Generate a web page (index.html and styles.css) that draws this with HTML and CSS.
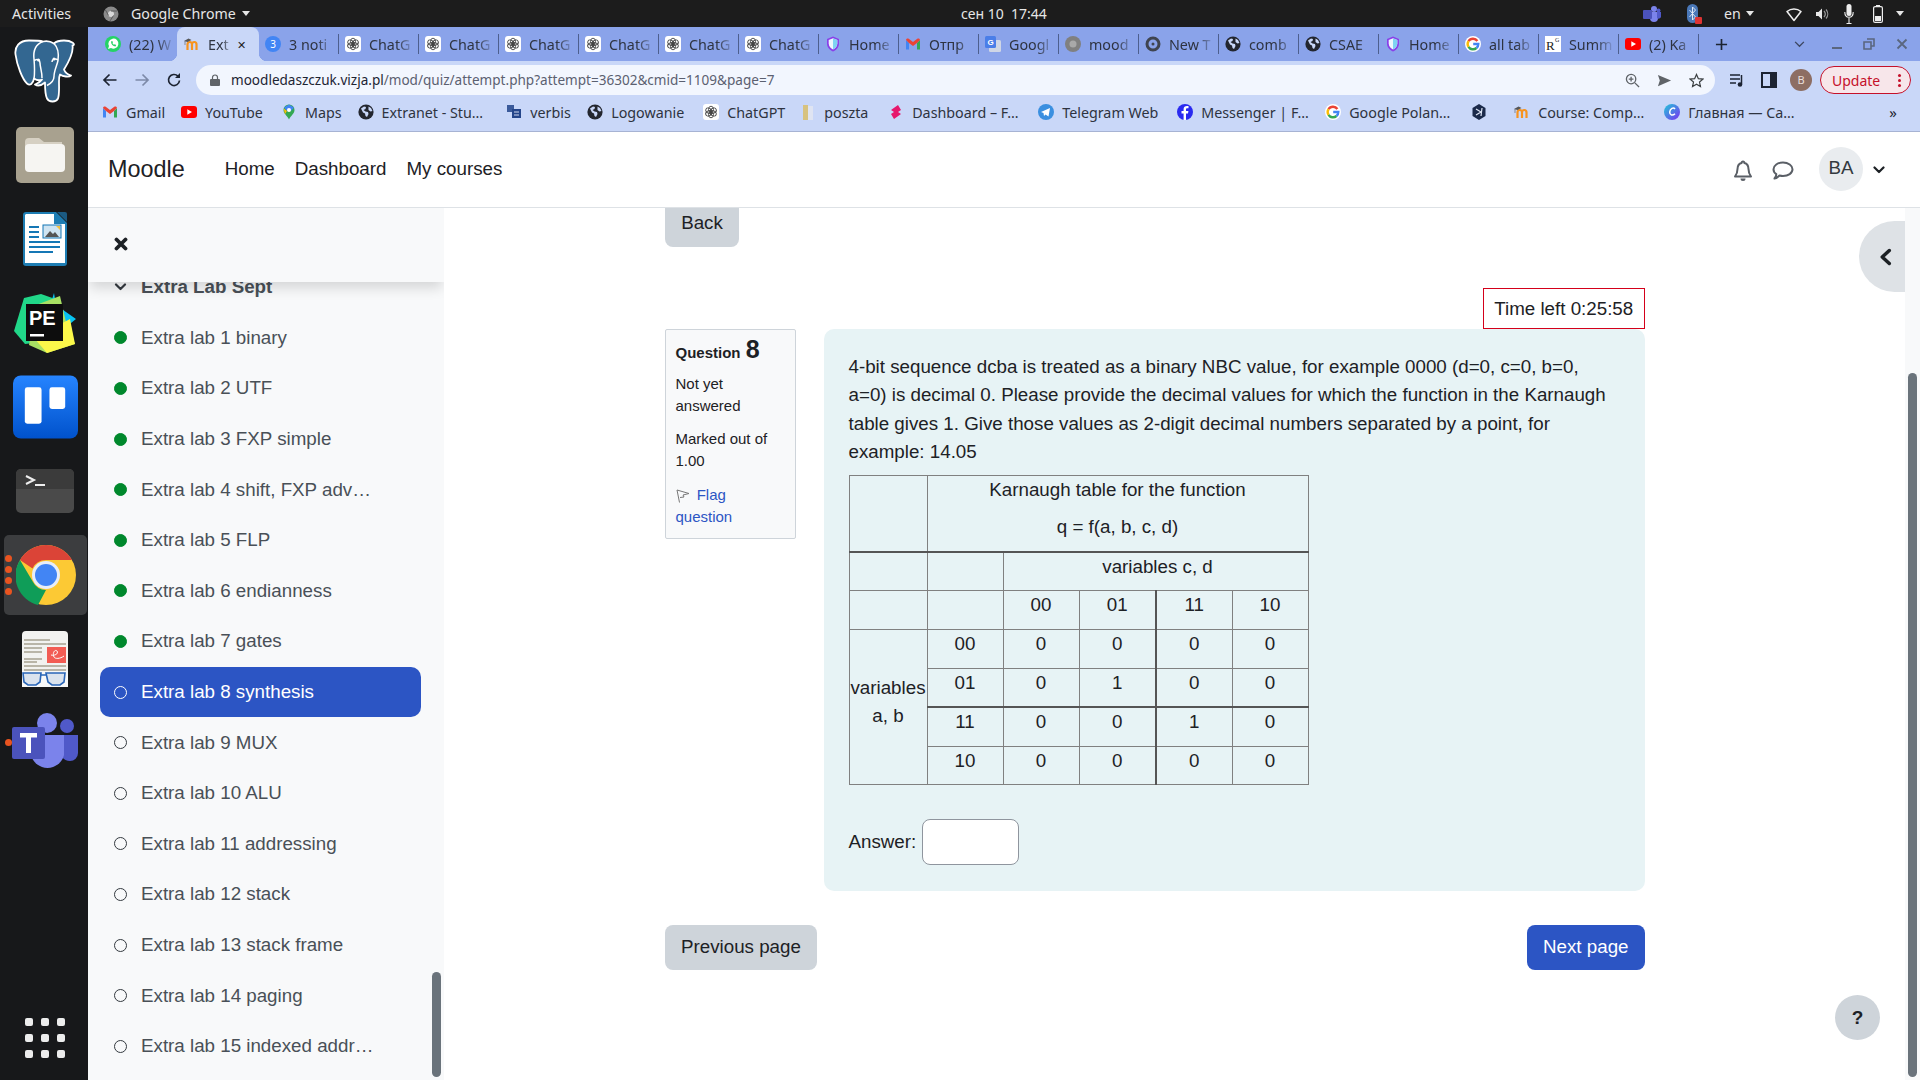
FILE: index.html
```html
<!DOCTYPE html>
<html lang="en">
<head>
<meta charset="utf-8">
<title>Extra lab 8 synthesis</title>
<link rel="stylesheet" href="styles.css">
</head>
<body>
<svg class="defs" aria-hidden="true">
  <symbol id="i-gpt" viewBox="0 0 16 16"><rect width="16" height="16" rx="3" fill="#fff"/><g fill="none" stroke="#444" stroke-width=".9"><ellipse cx="8" cy="5.500" rx="2.500" ry="3.300"/><ellipse cx="8" cy="5.500" rx="2.500" ry="3.300" transform="rotate(60 8 8)"/><ellipse cx="8" cy="5.500" rx="2.500" ry="3.300" transform="rotate(120 8 8)"/><ellipse cx="8" cy="5.500" rx="2.500" ry="3.300" transform="rotate(180 8 8)"/><ellipse cx="8" cy="5.500" rx="2.500" ry="3.300" transform="rotate(240 8 8)"/><ellipse cx="8" cy="5.500" rx="2.500" ry="3.300" transform="rotate(300 8 8)"/></g></symbol>
  <symbol id="i-globe" viewBox="0 0 16 16"><circle cx="8" cy="8" r="7.600" fill="#23262f"/><path d="M3 4.500l3-2 2 .5-.5 2-2 1 2 1.500 2.500.5.500 2-1.500 3-1.500-1-.5-2.500-2-1zM10.500 2.500l2.500 1.500 1.500 3-2 .5-2-1.500z" fill="#c9d7f8"/></symbol>
  <symbol id="i-home" viewBox="0 0 16 16"><path d="M8 .5l6 2.500v4.500c0 4-3 6.800-6 8-3-1.200-6-4-6-8V3z" fill="#8a3fe8"/><path d="M8 2.200l4.300 1.800v3.600c0 3-2.200 5-4.300 6-2.100-1-4.300-3-4.300-6V4z" fill="#eef6fd"/><path d="M8 2.200l4.300 1.800v3.600c0 3-2.200 5-4.300 6z" fill="#7fd3f2"/></symbol>
  <symbol id="i-gmail" viewBox="0 0 16 16"><path d="M1 4v9.500h3V7z" fill="#4285f4"/><path d="M12 7v6.500h3V4z" fill="#34a853"/><path d="M1 4c0-1.500 1.700-2 2.700-1.200L8 6l4.300-3.200C13.300 2 15 2.500 15 4l-3 3-4 3-4-3z" fill="#ea4335"/></symbol>
  <symbol id="i-google" viewBox="0 0 16 16"><g fill="none" stroke-width="2.400"><path d="M12.400 5A5.300 5.300 0 0 0 3.500 5.200" stroke="#ea4335"/><path d="M3.500 5.200a5.300 5.300 0 0 0 0 5.600" stroke="#fbbc05"/><path d="M3.500 10.800a5.300 5.300 0 0 0 8 1.200" stroke="#34a853"/><path d="M11.500 12c1.200-1 1.800-2.300 1.800-4H8.200" stroke="#4285f4"/></g></symbol>
  <symbol id="i-yt" viewBox="0 0 16 16"><rect y="2" width="16" height="12" rx="3" fill="#f00"/><path d="M6.300 5.200v5.600L11 8z" fill="#fff"/></symbol>
  <symbol id="i-moodle" viewBox="0 0 16 16"><path d="M3.500 14V8.500c0-1.800 1-2.500 2.300-2.500 1.200 0 2.200.7 2.200 2.500V14M8 8.500C8 6.700 9 6 10.300 6c1.200 0 2.200.7 2.200 2.500V14" fill="none" stroke="#f7931e" stroke-width="2.200"/><path d="M0 5l4.500-2.500L7.500 4 3.500 6z" fill="#555"/><path d="M1 5v4" stroke="#555" stroke-width=".6"/></symbol>
  <symbol id="i-chevron" viewBox="0 0 12 8"><path d="M1.500 1.500L6 6l4.500-4.500" fill="none" stroke="currentColor" stroke-width="2.200" stroke-linecap="round" stroke-linejoin="round"/></symbol>
</svg>

<header class="topbar">
  <div class="top-left">
    <span class="activities">Activities</span>
    <svg class="tb-app" viewBox="0 0 16 16"><circle cx="8" cy="8" r="7.500" fill="#8a8a8a"/><circle cx="8" cy="8" r="3" fill="#d8d8d8"/><path d="M8 5h6M5.500 9.500L2.500 4M10.500 9.500L7 15" stroke="#5b5b5b" stroke-width="1"/></svg>
    <span class="app-name">Google Chrome</span>
    <i class="tri"></i>
  </div>
  <time class="clock">сен 10&nbsp; 17:44</time>
  <div class="top-right">
    <svg class="st-teams" viewBox="0 0 18 18"><circle cx="11" cy="4" r="3" fill="#7b83eb"/><circle cx="15.500" cy="5.500" r="2" fill="#5059c9"/><path d="M7 7h8v6a4 4 0 0 1-8 0z" fill="#7b83eb"/><path d="M14 7h4v5a2.500 2.500 0 0 1-4 1z" fill="#5059c9"/><rect y="5" width="9" height="9" rx="1" fill="#4b53bc"/></svg>
    <svg class="st-bt" viewBox="0 0 16 22"><rect x="1" y="1" width="11" height="19" rx="5.500" fill="#4a78b8"/><path d="M3.500 7l6 7-3 3V4l3 3-6 7" fill="none" stroke="#dfe8f5" stroke-width="1"/><rect x="9" y="14" width="7" height="7" rx="1" fill="#d33"/></svg>
    <span class="st-lang">en</span><i class="tri st-tri1"></i>
    <svg class="st-wifi" viewBox="0 0 16 16"><path d="M1 5.500C5 2 11 2 15 5.500L8 14.500z" fill="none" stroke="#eee" stroke-width="1.500" stroke-linejoin="round"/></svg>
    <svg class="st-vol" viewBox="0 0 14 16"><path d="M1 6h2.500L7 2.500v11L3.500 10H1z" fill="#e8e8e8"/><path d="M9 5c1.500 1.700 1.500 4.300 0 6M11 3.500c2.300 2.600 2.300 6.400 0 9" fill="none" stroke="#999" stroke-width="1.200"/></svg>
    <svg class="st-mic" viewBox="0 0 10 20"><rect x="2.500" y="0" width="5" height="12" rx="2.500" fill="#eee"/><path d="M.8 8c0 7 8.400 7 8.400 0M5 14v5M2.500 19.500h5" fill="none" stroke="#eee" stroke-width="1.100"/></svg>
    <svg class="st-batt" viewBox="0 0 10 18"><path d="M3 1V0h4v1" fill="#eee"/><rect x=".6" y="1.600" width="8.800" height="15.800" rx="1.500" fill="none" stroke="#eee" stroke-width="1.200"/><rect x="2" y="11" width="6" height="5" fill="#eee"/></svg>
    <i class="tri st-tri2"></i>
  </div>
</header>

<div class="desk">
  <nav class="dock">
    <div class="dock-item">
      <svg class="d-pg" viewBox="0 0 64 64"><path d="M15 1.500C5 1.500 .500 8 1.500 15.500c1.500 11 7 25 11.500 29 3 2.500 6 .5 7-5 3 2 6 2 8 1-2 3-5 4-7 5 3 2 7 .5 10-2 0 6 0 12 2 16 2 4 9 4 11 0 1.500-4 1-10 1-17 0-3 0-5 1-7 3 2 9 3 11 1-3-1-6-3-7-6 5-8 9.500-18 8.500-24C62.500 6 58 1.500 50 1.500c-4 0-8 1-10 3-3-2-7-3-11-2-3-1-8-1-14-1z" fill="#336791" stroke="#fff" stroke-width="1.800" stroke-linejoin="round"/><path d="M29 2.500C22 5 19 11 20 20c.5 6 1 13 0 20M40 4.500c4 4 5 10 4 17-1 5-4 10-4 16 0 4-3 7-7 9M20 22c3-3 6-1 6 2 0 4 2 8 2 15M44 21c-3-2-6-1-6 2" fill="none" stroke="#fff" stroke-width="1.500"/><circle cx="24.500" cy="21" r="1.500" fill="#fff"/><circle cx="40" cy="20" r="1.500" fill="#fff"/></svg>
    </div>
    <div class="dock-item">
      <svg class="d-tile" viewBox="0 0 58 56"><rect width="58" height="56" rx="5" fill="#a8a18f"/><path d="M9 15a4 4 0 0 1 4-4h10l5 4h18v25H9z" fill="#d6d0c3"/><path d="M9 21a4 4 0 0 1 4-4h32a4 4 0 0 1 4 4v20a4 4 0 0 1-4 4H13a4 4 0 0 1-4-4z" fill="#f6f5f2"/></svg>
    </div>
    <div class="dock-item">
      <svg class="d-doc" viewBox="0 0 46 56"><path d="M4 1h30l11 11v40a3 3 0 0 1-3 3H4a3 3 0 0 1-3-3V4a3 3 0 0 1 3-3z" fill="#1e7db3"/><path d="M4 3h28v10h11v39H3V4z" fill="#fff"/><path d="M35 1h8a2 2 0 0 1 2 2v8z" fill="#1b5a82"/><path d="M7 15h10v2H7zM7 20h10v2H7zM7 25h10v2H7zM7 30h31v2H7zM7 35h31v2H7zM7 40h24v2H7z" fill="#1577b5"/><rect x="21" y="14" width="18" height="13" fill="#cfe4f2" stroke="#1577b5"/><path d="M23 26l5-6 3 3 2-2 4 5z" fill="#555"/><path d="M34 15h4v4z" fill="#f2c040"/></svg>
    </div>
    <div class="dock-item">
      <svg class="d-pe" viewBox="0 0 62 60"><path d="M10 5L27 1l20 7-9 40-27 3L0 38z" fill="#21d789"/><path d="M40 0l2 12 20 14-10 8-20-8z" fill="#07c3f2"/><path d="M22 12L46 3l6 26 9 22-28 9-18-8z" fill="#a8e063"/><path d="M20 45l36-19 5 25-28 9z" fill="#fcf84a"/><rect x="12" y="11" width="37" height="37" fill="#0d0d0d"/><text x="15" y="32" class="pe-text">PE</text><rect x="16" y="41" width="14" height="2.500" fill="#fff"/></svg>
    </div>
    <div class="dock-item">
      <svg class="d-trello" viewBox="0 0 66 64"><defs><linearGradient id="tr" x1="0" y1="0" x2="0" y2="1"><stop offset="0" stop-color="#2684ff"/><stop offset="1" stop-color="#0052cc"/></linearGradient></defs><rect width="66" height="64" rx="8" fill="url(#tr)"/><rect x="12" y="12" width="17" height="37" rx="2.500" fill="#fff"/><rect x="37" y="12" width="16" height="22" rx="2.500" fill="#fff"/></svg>
    </div>
    <div class="dock-item">
      <svg class="d-term" viewBox="0 0 58 44"><rect width="58" height="44" rx="5" fill="#4a4a4a"/><path d="M0 5a5 5 0 0 1 5-5h48a5 5 0 0 1 5 5v15H0z" fill="#3b3b3b"/><path d="M10 7l8 4-8 4" fill="none" stroke="#eee" stroke-width="2"/><rect x="19" y="15" width="10" height="2" fill="#eee"/></svg>
    </div>
    <div class="dock-item dock-active">
      <i class="pip pip1"></i><i class="pip pip2"></i><i class="pip pip3"></i><i class="pip pip4"></i>
      <svg class="d-chrome" viewBox="0 0 60 60"><circle cx="30" cy="30" r="30" fill="#fcc934"/><path d="M30 0a30 30 0 0 1 26 15H30a15 15 0 0 0-13.500 8.500L4 15A30 30 0 0 1 30 0z" fill="#db4437"/><path d="M4 15l13 22a15 15 0 0 0 13 8l-8 15A30 30 0 0 1 4 15z" fill="#0f9d58"/><circle cx="30" cy="30" r="14" fill="#e8eef8"/><circle cx="30" cy="30" r="11" fill="#4285f4"/></svg>
    </div>
    <div class="dock-item">
      <svg class="d-doc" viewBox="0 0 46 56"><rect width="46" height="56" rx="4" fill="#f2f2f0"/><path d="M2 8h26v2H2zM2 12h42v2H2zM2 16h18v2H2zM2 20h18v2H2zM2 27h18v2H2zM2 30h13v2H2zM2 34h42v2H2zM2 38h42v2H2z" fill="#b9b5a8"/><rect x="25" y="16" width="19" height="16" fill="#f25c54"/><path d="M29 24c3 1 8-1 6-4-2-2-5 2-3 6 1 2 6 2 10-1" fill="none" stroke="#fff" stroke-width="1"/><rect y="40" width="46" height="16" fill="#f8f8f8"/><path d="M1 42h18l-1 9-4 3H6l-4-3zM24 42h19l-1 9-4 3h-8l-4-3zM19 44h5" fill="#dbe3ee" stroke="#2a66b8" stroke-width="1.600"/></svg>
    </div>
    <div class="dock-item">
      <i class="pip pip-t"></i>
      <svg class="d-teams" viewBox="0 0 66 60"><circle cx="35" cy="10" r="10" fill="#7b83eb"/><circle cx="55" cy="13" r="7" fill="#5059c9"/><path d="M50 22h16v18a8 8 0 0 1-8 8 10 10 0 0 1-8-4z" fill="#5059c9"/><path d="M19 22h33v20a17 17 0 0 1-33 0z" fill="#7b83eb"/><rect y="14" width="33" height="32" rx="2" fill="#4b53bc"/><path d="M8 20h17v4.500h-6V40h-5V24.500H8z" fill="#fff"/></svg>
    </div>
    <div class="dock-grid"><i></i><i></i><i></i><i></i><i></i><i></i><i></i><i></i><i></i></div>
  </nav>

  <div class="browser">
    <div class="tabstrip">
      <div class="tab"><svg class="fav" viewBox="0 0 16 16"><circle cx="8" cy="8" r="8" fill="#25d366"/><path d="M3 13l1-3a5 5 0 1 1 2 2z" fill="#fff"/><path d="M6 5.500c0 3 2 4.500 4.500 5l.7-1.500-1.500-.8-.7.600c-.8-.400-1.300-1-1.600-1.700l.6-.7L7.300 5z" fill="#25d366"/></svg><span class="tab-t">(22) W</span></div>
      <div class="tab tab-active"><svg class="fav"><use href="#i-moodle"/></svg><span class="tab-t">Ext</span><span class="tab-x">✕</span></div>
      <div class="tab sep"><span class="fav badge3">3</span><span class="tab-t">3 noti</span></div>
      <div class="tab sep"><svg class="fav"><use href="#i-gpt"/></svg><span class="tab-t">ChatG</span></div>
      <div class="tab sep"><svg class="fav"><use href="#i-gpt"/></svg><span class="tab-t">ChatG</span></div>
      <div class="tab sep"><svg class="fav"><use href="#i-gpt"/></svg><span class="tab-t">ChatG</span></div>
      <div class="tab sep"><svg class="fav"><use href="#i-gpt"/></svg><span class="tab-t">ChatG</span></div>
      <div class="tab sep"><svg class="fav"><use href="#i-gpt"/></svg><span class="tab-t">ChatG</span></div>
      <div class="tab sep"><svg class="fav"><use href="#i-gpt"/></svg><span class="tab-t">ChatG</span></div>
      <div class="tab sep"><svg class="fav"><use href="#i-home"/></svg><span class="tab-t">Home</span></div>
      <div class="tab sep"><svg class="fav"><use href="#i-gmail"/></svg><span class="tab-t">Отпр</span></div>
      <div class="tab sep"><svg class="fav" viewBox="0 0 16 16"><rect x="4" y="4" width="12" height="12" rx="1.500" fill="#cfd6e6"/><rect width="11" height="12" rx="1.500" fill="#4a7ee8"/><text x="2.500" y="9" class="fav-g">G</text></svg><span class="tab-t">Googl</span></div>
      <div class="tab sep"><svg class="fav" viewBox="0 0 16 16"><circle cx="8" cy="8" r="8" fill="#808080"/><circle cx="8" cy="8" r="3.500" fill="#a9a9a9"/></svg><span class="tab-t">mood</span></div>
      <div class="tab sep"><svg class="fav" viewBox="0 0 16 16"><circle cx="8" cy="8" r="6" fill="none" stroke="#3f4450" stroke-width="3"/><circle cx="8" cy="8" r="1.500" fill="#3f4450"/></svg><span class="tab-t">New T</span></div>
      <div class="tab sep"><svg class="fav"><use href="#i-globe"/></svg><span class="tab-t">comb</span></div>
      <div class="tab sep"><svg class="fav"><use href="#i-globe"/></svg><span class="tab-t">CSAE</span></div>
      <div class="tab sep"><svg class="fav"><use href="#i-home"/></svg><span class="tab-t">Home</span></div>
      <div class="tab sep"><svg class="fav fav-white"><use href="#i-google"/></svg><span class="tab-t">all tab</span></div>
      <div class="tab sep"><svg class="fav" viewBox="0 0 16 16"><rect width="16" height="16" fill="#fff"/><text x="1" y="14" class="fav-r">R</text><text x="10" y="6" class="fav-rg">G</text></svg><span class="tab-t">Summ</span></div>
      <div class="tab sep"><svg class="fav"><use href="#i-yt"/></svg><span class="tab-t">(2) Ka</span></div>
      <div class="tab sep tab-end"></div>
      <svg class="tab-plus" viewBox="0 0 14 14"><path d="M7 1v12M1 7h12" stroke="#1d2433" stroke-width="1.800"/></svg>
      <svg class="win win-chev" viewBox="0 0 12 8"><path d="M1 1l5 5 5-5" fill="none" stroke="#3c4660" stroke-width="1.500"/></svg>
      <svg class="win win-min" viewBox="0 0 12 12"><path d="M1 10h10" stroke="#5a667f" stroke-width="2"/></svg>
      <svg class="win win-max" viewBox="0 0 12 12"><path d="M4 1h7v7H8M1 4h7v7H1z" fill="none" stroke="#5a667f" stroke-width="1.600"/></svg>
      <svg class="win win-close" viewBox="0 0 12 12"><path d="M1.500 1.500l9 9M10.500 1.500l-9 9" stroke="#5a667f" stroke-width="1.800"/></svg>
    </div>

    <div class="toolbar">
      <svg class="tool t-back" viewBox="0 0 16 16"><path d="M14.500 8H2M7.500 2.500L2 8l5.500 5.500" fill="none" stroke="#1d2433" stroke-width="1.700"/></svg>
      <svg class="tool t-fwd" viewBox="0 0 16 16"><path d="M1.500 8H14M8.500 2.500L14 8l-5.500 5.500" fill="none" stroke="#7d8aa8" stroke-width="1.700"/></svg>
      <svg class="tool t-reload" viewBox="0 0 16 16"><path d="M13.500 8.500a5.500 5.500 0 1 1-1.500-4.300" fill="none" stroke="#1d2433" stroke-width="1.700"/><path d="M14 1v5h-5z" fill="#1d2433"/></svg>
      <div class="omnibox">
        <svg class="lock" viewBox="0 0 10 12"><path d="M2.500 5V3.500a2.500 2.500 0 0 1 5 0V5" fill="none" stroke="#5f6368" stroke-width="1.200"/><rect y="5" width="10" height="7" rx="1" fill="#5f6368"/></svg>
        <span class="url"><b>moodledaszczuk.vizja.pl</b>/mod/quiz/attempt.php?attempt=36302&amp;cmid=1109&amp;page=7</span>
        <svg class="om-i om-zoom" viewBox="0 0 16 16"><circle cx="6.500" cy="6.500" r="5" fill="none" stroke="#5f6368" stroke-width="1.400"/><path d="M10.500 10.500L15 15M6.500 4v5M4 6.500h5" stroke="#5f6368" stroke-width="1.400"/></svg>
        <svg class="om-i om-send" viewBox="0 0 16 16"><path d="M1 2l14 6-14 6 2-6z" fill="#5f6368"/></svg>
        <svg class="om-i om-star" viewBox="0 0 16 16"><path d="M8 1.500l2 4.500 4.800.5-3.600 3.200 1 4.800L8 12l-4.200 2.500 1-4.800L1.200 6.500 6 6z" fill="none" stroke="#3c4043" stroke-width="1.300"/></svg>
      </div>
      <svg class="tool t-list" viewBox="0 0 16 16"><path d="M1 3h10M1 7h10M1 11h6" stroke="#1d2433" stroke-width="1.500"/><path d="M12.500 3v9" stroke="#1d2433" stroke-width="1.500"/><circle cx="11" cy="12.500" r="2.300" fill="#1d2433"/></svg>
      <svg class="tool t-side" viewBox="0 0 16 16"><rect x="1" y="1" width="14" height="14" fill="none" stroke="#1d2433" stroke-width="2"/><rect x="9" y="1" width="6" height="14" fill="#1d2433"/></svg>
      <span class="profile">B</span>
      <div class="update"><span>Update</span><i class="dots"></i></div>
    </div>

    <div class="bookmarks">
      <a class="bm"><svg class="fav"><use href="#i-gmail"/></svg><span>Gmail</span></a>
      <a class="bm"><svg class="fav"><use href="#i-yt"/></svg><span>YouTube</span></a>
      <a class="bm"><svg class="fav" viewBox="0 0 16 16"><path d="M8 .5a5.500 5.500 0 0 1 5.500 5.500c0 3.500-3.500 5.500-5.500 9.500C6 11.500 2.500 9.500 2.500 6A5.500 5.500 0 0 1 8 .5z" fill="#34a853"/><path d="M3 3.500L8 .5l5 3-2.500 3-5 0z" fill="#4285f4"/><path d="M2.700 4.500L6 7l-2 3z" fill="#fbbc05"/><circle cx="8" cy="6" r="2" fill="#fff"/></svg><span>Maps</span></a>
      <a class="bm"><svg class="fav"><use href="#i-globe"/></svg><span>Extranet - Stu…</span></a>
      <a class="bm"><svg class="fav" viewBox="0 0 16 16"><rect x="1" y="1" width="7" height="7" fill="#3a5a9b"/><rect x="6" y="5" width="9" height="9" fill="#24458a"/><path d="M8 8h5M8 11h5" stroke="#cfd8ee"/></svg><span>verbis</span></a>
      <a class="bm"><svg class="fav"><use href="#i-globe"/></svg><span>Logowanie</span></a>
      <a class="bm"><svg class="fav"><use href="#i-gpt"/></svg><span>ChatGPT</span></a>
      <a class="bm"><svg class="fav" viewBox="0 0 16 16"><rect x="3" y="1" width="5" height="15" fill="#d7c27f"/><rect x="8" y="2" width="5" height="14" fill="#dfe4f2"/></svg><span>poszta</span></a>
      <a class="bm"><svg class="fav" viewBox="0 0 16 16"><path d="M10 1L3 6l3 2-3 2 3 5 7-5-3-2 3-2z" fill="#e6176d"/></svg><span>Dashboard – F…</span></a>
      <a class="bm"><svg class="fav" viewBox="0 0 16 16"><circle cx="8" cy="8" r="8" fill="#3a8fe0"/><path d="M3 8l9-4-1.500 8.500-3-2-1.500 1.500-.5-3z" fill="#fff"/></svg><span>Telegram Web</span></a>
      <a class="bm"><svg class="fav" viewBox="0 0 16 16"><circle cx="8" cy="8" r="8" fill="#2a2af0"/><path d="M9 16V9.500h2l.4-2.500H9V5.500c0-.8.400-1.300 1.300-1.300h1.200V2.100c-2.800-.5-4.900.3-4.900 3V7H4.500v2.500h2.100V16z" fill="#fff"/></svg><span>Messenger | F…</span></a>
      <a class="bm"><svg class="fav fav-white"><use href="#i-google"/></svg><span>Google Polan…</span></a>
      <a class="bm"><svg class="fav" viewBox="0 0 16 16"><path d="M8 0l6.500 4v8L8 16l-6.500-4V4z" fill="#1b2a4a"/><path d="M5 5l5 3-5 3M11 4l-1 8" fill="none" stroke="#dfe6f5" stroke-width="1.200"/></svg></a>
      <a class="bm"><svg class="fav"><use href="#i-moodle"/></svg><span>Course: Comp…</span></a>
      <a class="bm"><svg class="fav" viewBox="0 0 16 16"><defs><linearGradient id="cv" x1="0" y1="0" x2="1" y2="1"><stop offset="0" stop-color="#21c8d8"/><stop offset="1" stop-color="#7b2ff2"/></linearGradient></defs><circle cx="8" cy="8" r="8" fill="url(#cv)"/><path d="M11 5c-1.500-2-5-.5-5.300 3-.2 3.200 3 4 5.300 1.700" fill="none" stroke="#fff" stroke-width="1.500"/></svg><span>Главная — Ca…</span></a>
      <span class="bm-more">»</span>
    </div>

    <div class="page">
      <header class="navbar">
        <span class="brand">Moodle</span>
        <a class="nav-link">Home</a>
        <a class="nav-link">Dashboard</a>
        <a class="nav-link">My courses</a>
        <svg class="nav-bell" viewBox="0 0 20 22"><path d="M10 1.500a1.300 1.300 0 0 1 1.300 1.500c3 .7 4.200 3 4.200 6 0 4 1 5.500 2.500 7.500H2c1.500-2 2.500-3.500 2.500-7.500 0-3 1.200-5.300 4.200-6A1.300 1.300 0 0 1 10 1.500z" fill="none" stroke="#5a5f66" stroke-width="2" stroke-linejoin="round"/><path d="M7.500 18.500a2.500 2.500 0 0 0 5 0z" fill="#5a5f66"/></svg>
        <svg class="nav-chat" viewBox="0 0 22 20"><path d="M11 1.500c5.300 0 9.500 3 9.500 6.800s-4.200 6.700-9.500 6.700c-1.300 0-2.500-.2-3.500-.5-1.200 1.200-3 2.700-5 3 1-1.200 1.800-2.700 1.800-4.300C2.500 12 1.500 10.300 1.500 8.300 1.500 4.500 5.700 1.500 11 1.500z" fill="none" stroke="#5a5f66" stroke-width="2" stroke-linejoin="round"/></svg>
        <span class="avatar">BA</span>
        <svg class="nav-caret"><use href="#i-chevron"/></svg>
      </header>

      <div class="page-body">
        <aside class="sidebar">
          <div class="side-head">
            <svg class="side-x" viewBox="0 0 14 14"><path d="M2.500 2.500l9 9M11.500 2.500l-9 9" stroke="#1d2125" stroke-width="3.800" stroke-linecap="round"/></svg>
          </div>
          <ul class="side-list">
            <li class="side-sec"><svg class="side-caret"><use href="#i-chevron"/></svg><span>Extra Lab Sept</span></li>
            <li class="side-item done"><i class="dot"></i><span>Extra lab 1 binary</span></li>
            <li class="side-item done"><i class="dot"></i><span>Extra lab 2 UTF</span></li>
            <li class="side-item done"><i class="dot"></i><span>Extra lab 3 FXP simple</span></li>
            <li class="side-item done"><i class="dot"></i><span>Extra lab 4 shift, FXP adv…</span></li>
            <li class="side-item done"><i class="dot"></i><span>Extra lab 5 FLP</span></li>
            <li class="side-item done"><i class="dot"></i><span>Extra lab 6 endianness</span></li>
            <li class="side-item done"><i class="dot"></i><span>Extra lab 7 gates</span></li>
            <li class="side-item current"><i class="dot"></i><span>Extra lab 8 synthesis</span></li>
            <li class="side-item"><i class="dot"></i><span>Extra lab 9 MUX</span></li>
            <li class="side-item"><i class="dot"></i><span>Extra lab 10 ALU</span></li>
            <li class="side-item"><i class="dot"></i><span>Extra lab 11 addressing</span></li>
            <li class="side-item"><i class="dot"></i><span>Extra lab 12 stack</span></li>
            <li class="side-item"><i class="dot"></i><span>Extra lab 13 stack frame</span></li>
            <li class="side-item"><i class="dot"></i><span>Extra lab 14 paging</span></li>
            <li class="side-item"><i class="dot"></i><span>Extra lab 15 indexed addr…</span></li>
          </ul>
          <i class="side-thumb"></i>
        </aside>

        <main class="main">
          <a class="btn btn-back">Back</a>
          <div class="timer-row"><div class="timer">Time left 0:25:58</div></div>
          <section class="question">
            <div class="q-info">
              <h3 class="q-no">Question <span>8</span></h3>
              <p>Not yet answered</p>
              <p>Marked out of 1.00</p>
              <a class="q-flag"><svg class="flag" viewBox="0 0 14 14"><path d="M3.500 13.500L1 1l12 3.500-6 1.500 1 2-4 .5" fill="none" stroke="#777" stroke-width="1"/></svg> Flag question</a>
            </div>
            <div class="q-body">
              <p class="q-text">4-bit sequence dcba is treated as a binary NBC value, for example 0000 (d=0, c=0, b=0, a=0) is decimal 0. Please provide the decimal values for which the function in the Karnaugh table gives 1. Give those values as 2-digit decimal numbers separated by a point, for example: 14.05</p>
              <table class="kmap">
                <colgroup><col class="c1"><col class="c2"><col class="c3"><col class="c4"><col class="c3"><col class="c3"></colgroup>
                <tr><td></td><td colspan="5"><p>Karnaugh table for the function</p><p>q = f(a, b, c, d)</p></td></tr>
                <tr class="thick-top"><td></td><td></td><td colspan="4" class="vars-cd"><p>variables c, d</p></td></tr>
                <tr><td></td><td></td><td><p>00</p></td><td class="thick-r"><p>01</p></td><td><p>11</p></td><td><p>10</p></td></tr>
                <tr><td rowspan="4" class="mid"><p>variables<br>a, b</p></td><td><p>00</p></td><td><p>0</p></td><td class="thick-r"><p>0</p></td><td><p>0</p></td><td><p>0</p></td></tr>
                <tr><td><p>01</p></td><td><p>0</p></td><td class="thick-r"><p>1</p></td><td><p>0</p></td><td><p>0</p></td></tr>
                <tr class="thick-cells"><td><p>11</p></td><td><p>0</p></td><td class="thick-r"><p>0</p></td><td><p>1</p></td><td><p>0</p></td></tr>
                <tr><td><p>10</p></td><td><p>0</p></td><td class="thick-r"><p>0</p></td><td><p>0</p></td><td><p>0</p></td></tr>
              </table>
              <div class="answer"><label>Answer:</label><input class="answer-in" type="text"></div>
            </div>
          </section>
          <div class="q-nav"><a class="btn">Previous page</a><a class="btn btn-primary">Next page</a></div>
          <button class="drawer-toggle"><svg viewBox="0 0 12 16"><path d="M9.500 2L3 8l6.500 6" fill="none" stroke="#1d2125" stroke-width="3.200" stroke-linecap="round" stroke-linejoin="round"/></svg></button>
          <span class="help">?</span>
        </main>

        <div class="page-scroll"><i></i></div>
      </div>
    </div>
  </div>
</div>
</body>
</html>
```
FILE: styles.css
```css
* { box-sizing: border-box; }
html, body { margin: 0; height: 1080px; overflow: hidden; }
body { font-family: "Liberation Sans", Arial, sans-serif; background: #fff; color: #1d2125; }
.defs { position: absolute; width: 0; height: 0; }
a { text-decoration: none; }

/* GNOME top bar */
.topbar { height: 27px; background: #1c1c1c; color: #e6e6e6; display: flex; align-items: center; font: 14.2px "Noto Sans", sans-serif; }
.top-left { flex: 0 0 961px; display: flex; align-items: center; padding-left: 12px; }
.activities { width: 91px; white-space: nowrap; }
.tb-app { width: 16px; height: 16px; }
.app-name { margin-left: 12px; }
.tri { width: 0; height: 0; border-left: 4.5px solid transparent; border-right: 4.5px solid transparent; border-top: 5px solid #e6e6e6; display: block; }
.top-left .tri { margin-left: 6px; }
.clock { font-size: 14px; }
.top-right { margin-left: auto; display: flex; align-items: center; padding-right: 16px; }
.st-teams { width: 18px; height: 18px; }
.st-bt { width: 16px; height: 22px; margin-left: 25px; }
.st-lang { margin-left: 22px; width: 17px; }
.st-tri1 { margin-left: 5px; }
.st-wifi { width: 16px; height: 16px; margin-left: 32px; }
.st-vol { width: 14px; height: 16px; margin-left: 13px; }
.st-mic { width: 10px; height: 20px; margin-left: 15px; }
.st-batt { width: 10px; height: 18px; margin-left: 19px; }
.st-tri2 { margin-left: 13px; }

.desk { display: flex; height: 1053px; }

/* Dock */
.dock { width: 88px; flex: none; background: #17181a; padding-top: 2px; display: flex; flex-direction: column; }
.dock-item { height: 84px; flex: none; display: flex; align-items: center; justify-content: center; position: relative; }
.dock-item svg { display: block; }
.d-pg { width: 64px; height: 64px; margin-left: 3px; }
.d-tile { width: 58px; height: 56px; margin-left: 2px; }
.d-doc { width: 46px; height: 56px; margin-left: 2px; }
.d-pe { width: 62px; height: 60px; margin-left: 2px; }
.d-trello { width: 65px; height: 64px; margin-left: 2px; }
.d-term { width: 58px; height: 44px; margin-left: 2px; }
.d-chrome { width: 60px; height: 60px; position: relative; margin-left: 3px; }
.d-teams { width: 66px; height: 60px; margin-left: 2px; }
.dock-active::before { content: ""; position: absolute; left: 4px; right: 1px; top: 2px; bottom: 2px; background: #3c3d3f; border-radius: 5px; }
.pip { position: absolute; left: 4.5px; width: 7px; height: 7px; border-radius: 50%; background: #e95420; z-index: 1; }
.pip1 { top: 22px; } .pip2 { top: 33px; } .pip3 { top: 44px; } .pip4 { top: 55px; }
.pip-t { top: 38px; }
.dock-grid { margin-top: auto; margin-bottom: 22px; margin-left: 25px; display: grid; grid-template-columns: repeat(3, 8px); gap: 8px; }
.dock-grid i { width: 8px; height: 8px; border-radius: 2px; background: #ececec; }

.browser { flex: 1; min-width: 0; display: flex; flex-direction: column; }

/* Tab strip */
.tabstrip { height: 34px; background: #8aa3ea; display: flex; padding-left: 10px; align-items: stretch; flex: none; position: relative; }
.tab { width: 80px; flex: none; display: flex; align-items: center; padding-left: 7px; font: 14.3px "Noto Sans", sans-serif; color: #2e3340; position: relative; }
.tab.sep::before { content: ""; position: absolute; left: 0; top: 7px; bottom: 7px; width: 1px; background: #4d5f8e; }
.tab-t { margin-left: 8px; white-space: nowrap; overflow: hidden; flex: 1; -webkit-mask-image: linear-gradient(90deg, #000 60%, transparent 100%); mask-image: linear-gradient(90deg, #000 60%, transparent 100%); margin-right: 3px; }
.tab-active { background: #c9d7f8; border-radius: 8px 8px 0 0; margin-left: -1px; width: 82px; margin-right: -1px; }
.tab-active::before, .tab-active::after { content: ""; position: absolute; bottom: 0; width: 8px; height: 8px; }
.tab-active::before { left: -8px; background: radial-gradient(circle at 0 0, transparent 8px, #c9d7f8 8.5px); }
.tab-active::after { right: -8px; background: radial-gradient(circle at 100% 0, transparent 8px, #c9d7f8 8.5px); }
.tab-active .tab-t { flex: 0 0 24px; }
.tab-x { font-size: 11px; margin-left: 2px; color: #222; }
.tab-active + .tab.sep::before { display: none; }
.tab-end { width: 0; padding: 0; }
.fav { width: 16px; height: 16px; flex: none; display: block; }
.fav-white { background: #fff; border-radius: 50%; }
.badge3 { border-radius: 50%; background: #4285f4; color: #fff; font: 10px/16px "Noto Sans", sans-serif; text-align: center; }
.fav-g { font: bold 8px "Liberation Sans", sans-serif; fill: #fff; }
.fav-r { font: 13px "Liberation Serif", serif; fill: #222; }
.fav-rg { font: 6px "Liberation Serif", serif; fill: #222; }
.tab-plus { width: 13px; height: 13px; align-self: center; margin-left: 17px; }
.win { align-self: center; }
.win-chev { width: 11px; height: 7px; margin-left: 66px; }
.win-min { width: 12px; height: 12px; margin-left: 26px; }
.win-max { width: 12px; height: 12px; margin-left: 20px; }
.win-close { width: 12px; height: 12px; margin-left: 21px; }

/* Toolbar */
.toolbar { height: 38px; background: #c9d7f8; display: flex; align-items: center; padding: 0 9px 0 14px; flex: none; }
.tool { width: 16px; height: 16px; flex: none; }
.t-fwd, .t-reload { margin-left: 16px; }
.omnibox { width: 1519px; margin-left: 14px; height: 30px; border-radius: 15px; background: #f2f6fe; display: flex; align-items: center; padding-left: 14px; flex: none; }
.lock { width: 10px; height: 12px; flex: none; }
.url { margin-left: 11px; font: 13.55px "Noto Sans", sans-serif; color: #5b6070; white-space: nowrap; }
.url b { font-weight: 400; color: #1d2433; }
.om-i { width: 15px; height: 15px; flex: none; }
.om-zoom { margin-left: auto; }
.om-send { margin-left: 17px; }
.om-star { margin-left: 17px; margin-right: 11px; }
.t-list { margin-left: 14px; }
.t-side { margin-left: 16px; }
.profile { width: 22px; height: 22px; border-radius: 50%; background: #8d6e63; color: #eadfdb; font: 11px/22px "Noto Sans", sans-serif; text-align: center; margin-left: 13px; flex: none; }
.update { width: 91px; height: 28px; margin-left: 8px; border: 1px solid #c5102a; border-radius: 14px; background: #f7e6ea; color: #c5102a; display: flex; align-items: center; justify-content: space-between; padding: 0 9px 0 11px; font: 14px "Noto Sans", sans-serif; flex: none; }
.dots { width: 3px; height: 3px; border-radius: 50%; background: #c5102a; box-shadow: 0 -5px #c5102a, 0 5px #c5102a; }

/* Bookmarks */
.bookmarks { height: 33px; flex: none; background: #c9d7f8; border-bottom: 1px solid #a7b3d3; display: grid; grid-template-columns: 79px 100px 76.6px 148.6px 81px 116px 97px 88px 150px 139px 148px 146px 43px 150px 225px auto; padding-left: 14px; align-items: center; padding-bottom: 6px; }
.bm { display: flex; align-items: center; gap: 8px; font: 14.3px "Noto Sans", sans-serif; color: #2e3340; white-space: nowrap; min-width: 0; }
.bm-more { font: 15px "Noto Sans", sans-serif; color: #1d2433; }

/* Page */
.page { flex: 1; display: flex; flex-direction: column; min-height: 0; }
.navbar { height: 76px; flex: none; border-bottom: 1px solid #dee2e6; display: flex; align-items: center; padding-left: 20px; background: #fff; position: relative; z-index: 3; }
.brand { font-size: 23.4px; margin-right: 40px; }
.nav-link { font-size: 18.75px; color: #1d2125; margin: 0 20px 2px 0; }
.nav-bell { width: 20px; height: 22px; margin-left: auto; margin-top: 2px; }
.nav-chat { width: 22px; height: 20px; margin-left: 19px; margin-top: 2px; }
.avatar { width: 44px; height: 44px; border-radius: 50%; background: #e9ecef; color: #343a40; font-size: 18.75px; line-height: 42px; text-align: center; margin-left: 25px; margin-bottom: 2px; }
.nav-caret { width: 12px; height: 8px; margin-left: 10px; margin-right: 35px; color: #1d2125; }

.page-body { flex: 1; display: flex; min-height: 0; }

/* Course index */
.sidebar { width: 356px; flex: none; background: #f8f9fa; position: relative; overflow: hidden; }
.side-head { height: 74px; background: #f8f9fa; box-shadow: 0 8px 12px -2px rgba(0, 0, 0, .14); position: relative; z-index: 2; display: flex; align-items: center; padding: 0 0 3px 26px; }
.side-x { width: 14px; height: 14px; }
.side-list { list-style: none; margin: -20px 0 0; padding: 0; font-size: 18.75px; color: #495057; }
.side-sec, .side-item { height: 50.6px; display: flex; align-items: center; padding-left: 26px; white-space: nowrap; }
.side-sec { font-weight: 700; }
.side-caret { width: 13px; height: 8px; margin-right: 14px; color: #343a40; }
.dot { width: 13px; height: 13px; border-radius: 50%; border: 1.5px solid #343a40; margin-right: 14px; flex: none; }
.done .dot { background: #00882c; border-color: #00882c; }
.current { position: relative; color: #fff; }
.current::before { content: ""; position: absolute; left: 12px; width: 321px; top: .3px; height: 50px; border-radius: 10px; background: #2c55c4; }
.current > * { position: relative; }
.current .dot { border-color: #fff; }
.side-thumb { position: absolute; right: 3px; bottom: 3px; width: 9px; height: 105px; background: #6a737b; border-radius: 5px; z-index: 3; }

/* Main column */
.main { flex: 1; min-width: 0; position: relative; overflow: hidden; padding-left: 221px; font-size: 18.75px; line-height: 28.4px; }
.btn { display: inline-block; height: 45px; padding: 0 16px; line-height: 43px; background: #ced4da; color: #1d2125; border-radius: 8px; }
.btn-back { display: block; width: 74px; height: 47px; margin-top: -8px; padding: 8px 0 0; text-align: center; line-height: 30px; }
.timer-row { width: 980px; display: flex; justify-content: flex-end; margin-top: 41px; }
.timer { height: 41px; width: 162.5px; border: 1px solid #d4001a; text-align: center; line-height: 40px; background: #fff; white-space: nowrap; position: relative; z-index: 1; }
.question { width: 980px; display: flex; align-items: flex-start; gap: 28px; }
.q-info { width: 130.5px; flex: none; height: 210px; padding: 7px 14px 0 9.5px; background: #f8f9fa; border: 1px solid #ced4da; border-radius: 2px; font-size: 15px; line-height: 22px; }
.q-no { margin: 0 0 8px; font-size: 15px; font-weight: 700; line-height: 24px; white-space: nowrap; }
.q-no span { font-size: 25px; margin-left: 1px; }
.q-info p { margin: 0 0 11px; }
.q-info p + p { margin-bottom: 12px; }
.q-flag { color: #2c55c4; }
.flag { width: 14px; height: 14px; vertical-align: -3px; margin-right: 3px; }
.q-body { flex: 1; min-width: 0; height: 562px; background: #e7f3f5; border-radius: 10px; padding: 24px 25px 0; }
.q-text { margin: 0 0 8px; }
.kmap { border-collapse: collapse; table-layout: fixed; width: 459px; line-height: 28px; text-align: center; }
.c1 { width: 78px; } .c2 { width: 76px; } .c3 { width: 76px; } .c4 { width: 77px; }
.kmap td { border: 1px solid #808080; padding: 0; vertical-align: top; }
.kmap p { margin: 0 0 9.6px; }
.kmap td.mid { vertical-align: middle; }
.kmap td.vars-cd { padding-left: 4px; }
.thick-top td { border-top: 2px solid #555; }
.thick-r { border-right: 2px solid #555 !important; }
.thick-cells td { border-top: 2px solid #555; }
.answer { display: flex; align-items: center; margin-top: 34px; gap: 6px; }
.answer-in { width: 97px; height: 46px; border: 1px solid #8f959e; border-radius: 8px; background: #fff; padding: 0; }
.q-nav { width: 980px; display: flex; justify-content: space-between; margin-top: 34px; }
.btn-primary { background: #2c55c4; color: #fff; padding: 0 16.5px; }
.drawer-toggle { position: absolute; right: 0; top: 13px; width: 46px; height: 71px; border: 0; padding: 0 0 0 7px; background: #dee2e6; border-radius: 36px 0 0 36px; display: flex; align-items: center; justify-content: center; }
.drawer-toggle svg { width: 13px; height: 18px; }
.help { position: absolute; right: 25px; bottom: 40px; width: 45px; height: 45px; border-radius: 50%; background: #ced4da; font-weight: 700; font-size: 19px; line-height: 45px; text-align: center; }
.page-scroll { width: 15px; flex: none; background: #f8f9fa; padding: 165px 3px 3px; }
.page-scroll i { display: block; width: 9px; height: 704px; background: #6a737b; border-radius: 5px; }
.pe-text { font: 700 20px "Liberation Sans", sans-serif; fill: #fff; }
```
